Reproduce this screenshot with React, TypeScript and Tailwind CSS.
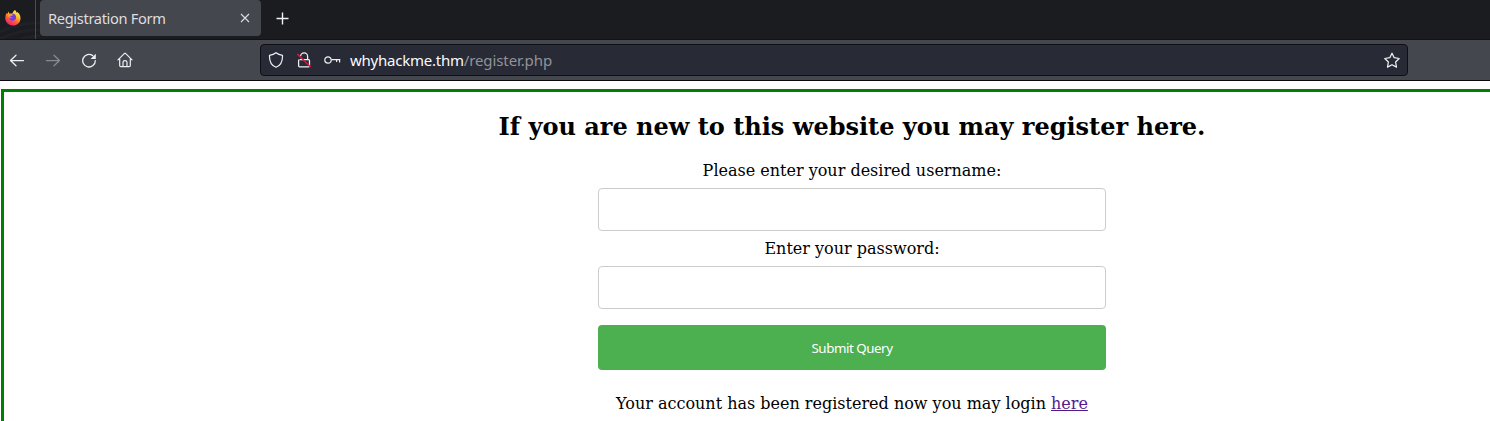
function FirefoxLogo() {
  return (
    <svg width="18" height="18" viewBox="0 0 18 18">
      <defs>
        <linearGradient id="flame" x1="0.8" y1="0" x2="0.25" y2="1">
          <stop offset="0" stopColor="#fff44f" />
          <stop offset="0.35" stopColor="#ffbd2e" />
          <stop offset="0.65" stopColor="#ff5a36" />
          <stop offset="1" stopColor="#f0147c" />
        </linearGradient>
      </defs>
      <path
        d="M11 1c1 1 1.400 1.800 1.600 2.800.5-.2.6-.5.7-.9C15.500 4.500 16.500 6.800 16.500 9.200 16.500 13.500 13.200 16.500 9 16.500s-7.700-3.100-7.700-7.200c0-2.200.5-4 1.400-5.300l.5 1.200L4.500 2.600l.8 2c1-.3 2.200-.2 3 .2C8.600 3.500 9.500 2 11 1z"
        fill="url(#flame)"
      />
      <path d="M8 4.800c2.800-.2 4.200 1.600 4.100 3.700-.1 2.200-1.700 3.300-3.500 3.200-1.900 0-3.200-1.200-3.400-2.800 1 .5 2.300.2 3-.8-1.500.1-2.300-.3-3-1.600C6.300 7.100 7.600 7.100 8.800 6.300z" fill="#7340d8" />
      <path d="M3.800 5.500c1.200-.8 2.700-.7 4.300-.4-.3.900-1.400 1.100-2.200 1.500l.3 1.200c-1.500.5-2.400-.7-2.400-2.300z" fill="#ff9738" />
    </svg>
  );
}

function TabStrip() {
  return (
    <div className="flex h-10 border-b border-[#111216] bg-[#1b1c20]">
      <div className="relative h-full w-10 shrink-0 overflow-hidden">
        <svg className="absolute left-0 top-0" width="40" height="40" fill="none" stroke="#202126" strokeWidth="3">
          <path d="M0 32Q20 22 40 23M0 39Q20 29 40 30M20 40Q28 36 40 36" />
        </svg>
        <div className="absolute left-1 top-[9px]"><FirefoxLogo /></div>
        <div className="absolute left-[35px] top-0 h-full w-px bg-[#4b4c52]" />
      </div>
      <div className="flex h-9 w-[221px] items-center justify-between rounded-[4px] bg-[#44474e] pl-2 pr-[11px] text-[#dedee0]">
        <span className="text-[14.67px] leading-5 tracking-[-0.35px]">Registration Form</span>
        <svg width="10" height="10" viewBox="0 0 10 10" fill="none" stroke="currentColor" strokeWidth="1.1">
          <path d="M1 1l8 8M9 1L1 9" />
        </svg>
      </div>
      <svg className="ml-[15px] mt-3" width="13" height="13" fill="none" stroke="#f2f2f2" strokeWidth="1.4">
        <path d="M6.500.5v12M.5 6.500h12" />
      </svg>
    </div>
  );
}

function NavBar() {
  return (
    <div className="flex h-[41px] items-center border-b border-[#08080d] bg-[#44474e]">
      <div className="flex w-[260px] items-center gap-5 pl-[9px] text-[#f0f0f2]">
        <svg width="16" height="16" fill="none" stroke="currentColor" strokeWidth="1.25" strokeLinecap="round" strokeLinejoin="round">
          <path d="M14.500 8.500h-13M7 3.200L1.500 8.500 7 13.800" />
        </svg>
        <svg className="opacity-40" width="16" height="16" fill="none" stroke="currentColor" strokeWidth="1.25" strokeLinecap="round" strokeLinejoin="round">
          <path d="M1.500 8.500h13M9 3.200L14.500 8.500 9 13.800" />
        </svg>
        <svg width="16" height="16" fill="none" stroke="currentColor" strokeWidth="1.3" strokeLinecap="round">
          <path d="M14.300 8.700A6.300 6.300 0 1 1 11.700 3.600" />
          <path d="M14.800 1.800v5.200H9.600z" fill="currentColor" stroke="none" />
        </svg>
        <svg width="16" height="16" fill="none" stroke="currentColor" strokeWidth="1.2" strokeLinecap="round" strokeLinejoin="round">
          <path d="M1 7.900L7.500 1.400h1L15 7.900M2.700 6.800v6.700q0 1.200 1.200 1.200h8.200q1.200 0 1.200-1.200V6.800M6 14.500V10.300Q6 8.700 8 8.700t2 1.600v4.200" />
        </svg>
      </div>
      <div className="flex h-8 w-[1148px] items-center rounded border border-[#0e0f15] bg-[#282a36] pl-[7px] pr-[7px] text-[#f0f0f2]">
        <svg width="16" height="16" fill="none" stroke="currentColor" strokeWidth="1.2" strokeLinejoin="round">
          <path d="M8 .7Q10.500 2.800 14.500 3.300C14.700 8.800 12.800 13.500 8 15.300 3.200 13.500 1.300 8.800 1.500 3.300Q5.500 2.800 8 .7z" />
        </svg>
        <svg className="ml-3" width="16" height="16" fill="none" stroke="currentColor" strokeWidth="1.25">
          <path d="M4.600 4.300a3.500 3.500 0 0 1 7 0v3.200M4 7.600h8.500q1 0 1 1v5.200q0 1-1 1H3.600q-1 0-1-1V8.600q0-1 1-1" />
          <path d="M1.300 2l13.300 13" stroke="#e2153d" strokeWidth="1.4" />
        </svg>
        <svg className="ml-3" width="17" height="16" fill="none" stroke="currentColor" strokeWidth="1.2">
          <circle cx="4" cy="8" r="3.200" />
          <path d="M7.300 7.600h9M15.600 7.600v3M12.600 7.600v2.300" />
        </svg>
        <div className="ml-[9px] flex-1 text-[15px] leading-5 tracking-[-0.17px] text-[#fbfbfe]">
          <span className="tracking-[-0.24px]">whyhackme.thm</span><span className="tracking-[-0.1px] text-[#929398]">/register.php</span>
        </div>
        <svg width="16" height="16" viewBox="0 0 16 16" fill="none" stroke="currentColor" strokeWidth="1.25" strokeLinejoin="round">
          <path d="M8 1.200l2.200 4.500 5 .8-3.600 3.500.9 5.100L8 12.700l-4.500 2.400.9-5.100L.8 6.500l5-.8z" />
        </svg>
      </div>
    </div>
  );
}

export default function App() {
  return (
    <div className="flex h-[421px] w-[1490px] flex-col overflow-hidden bg-white">
      <header className="shrink-0 font-['Noto_Sans',sans-serif]">
        <TabStrip />
        <NavBar />
      </header>
      <main className="ml-px mt-2 flex h-[420px] w-[1702px] shrink-0 flex-col items-center border-[3px] border-[#008000] font-['DejaVu_Serif',serif] text-base leading-[19px] text-black">
        <h2 className="mt-[21px] text-2xl font-bold leading-7">If you are new to this website you may register here.</h2>
        <form className="mt-5 flex w-[508px] flex-col text-center" onSubmit={(event) => event.preventDefault()}>
          <label htmlFor="username">Please enter your desired username:</label>
          <input id="username" className="mt-2 h-[43px] rounded border border-[#cccccc] px-5" />
          <label htmlFor="password" className="mt-2">Enter your password:</label>
          <input id="password" type="password" className="mt-2 h-[43px] rounded border border-[#cccccc] px-5" />
          <button className="mt-4 h-[45px] rounded bg-[#4caf50] pt-0.5 font-['Noto_Sans',sans-serif] text-[13.33px] tracking-[-0.45px] text-white">Submit Query</button>
        </form>
        <p className="mt-6">Your account has been registered now you may login <a href="#" className="text-[#551a8b] underline">here</a></p>
      </main>
    </div>
  );
}
